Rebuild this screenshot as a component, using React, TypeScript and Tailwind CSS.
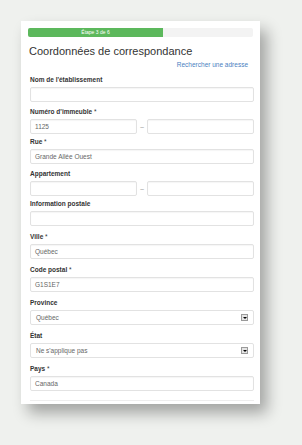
const font = { fontFamily: '"Liberation Sans", Arial, sans-serif' };

function Label({ text, required }: { text: string; required?: boolean }) {
    return (
        <div className="mb-[3px] text-[6.5px] font-bold leading-[8px] text-[#333]">
            {text}
            {required && <span className="font-normal"> *</span>}
        </div>
    );
}

function Input({ value, className = '' }: { value?: string; className?: string }) {
    return (
        <div
            className={`h-[15px] rounded-[2px] border border-[#e2e2e2] bg-white px-[4px] text-[6.5px] leading-[13px] text-[#666] shadow-[inset_0_1px_1px_rgba(0,0,0,0.04)] ${className}`}
        >
            {value}
        </div>
    );
}

function Select({ value }: { value: string }) {
    return (
        <div className="flex h-[15px] items-center justify-between rounded-[2px] border border-[#e2e2e2] bg-white pl-[5px] pr-[5px] text-[6.5px] text-[#666]">
            <span>{value}</span>
            <span className="flex h-[7px] w-[7px] items-center justify-center border border-[#9a9a9a] bg-[#e4e4e4]">
                <span className="h-0 w-0 border-x-[2px] border-t-[2px] border-x-transparent border-t-black" />
            </span>
        </div>
    );
}

function Pair({ left }: { left?: string }) {
    return (
        <div className="flex items-center">
            <Input value={left} className="w-[107px]" />
            <span className="w-[10px] text-center text-[6.5px] text-[#999]">–</span>
            <Input className="flex-1" />
        </div>
    );
}

export default function App() {
    return (
        <div className="min-h-[445px] w-[302px] bg-[#eff1ee] pl-[21px] pt-[21px]" style={font}>
            <div className="w-[239px] bg-white pb-[3px] pl-[9px] pr-[6px] pt-[7px] shadow-[7px_9px_14px_rgba(0,0,0,0.32)]">
                <div className="-ml-[2px] mr-[1px] h-[9px] rounded-[2px] bg-[#f3f3f3]">
                    <div className="flex h-[9px] w-[135px] items-center justify-center rounded-l-[2px] bg-[#5cb85c] text-[5px] text-white">
                        Étape 3 de 6
                    </div>
                </div>
                <h1 className="-ml-[1px] mt-[7px] text-[11px] leading-[14px] text-[#333]">
                    Coordonnées de correspondance
                </h1>
                <div className="mr-[6px] mt-[3px] text-right text-[6.5px] leading-[8px] text-[#4a7fc1]">
                    Rechercher une adresse
                </div>

                <div className="mt-[7px]">
                    <Label text="Nom de l'établissement" />
                    <Input />
                </div>
                <div className="mt-[6px]">
                    <Label text="Numéro d'immeuble" required />
                    <Pair left="1125" />
                </div>
                <div className="mt-[4px]">
                    <Label text="Rue" required />
                    <Input value="Grande Allée Ouest" />
                </div>
                <div className="mt-[6px]">
                    <Label text="Appartement" />
                    <Pair />
                </div>
                <div className="mt-[4px]">
                    <Label text="Information postale" />
                    <Input />
                </div>
                <div className="mt-[7px]">
                    <Label text="Ville" required />
                    <Input value="Québec" />
                </div>
                <div className="mt-[7px]">
                    <Label text="Code postal" required />
                    <Input value="G1S1E7" />
                </div>
                <div className="mt-[7px]">
                    <Label text="Province" />
                    <Select value="Québec" />
                </div>
                <div className="mt-[7px]">
                    <Label text="État" />
                    <Select value="Ne s'applique pas" />
                </div>
                <div className="mt-[7px]">
                    <Label text="Pays" required />
                    <Input value="Canada" />
                </div>
                <div className="mt-[9px] h-px bg-[#eeeeee]" />
            </div>
        </div>
    );
}
